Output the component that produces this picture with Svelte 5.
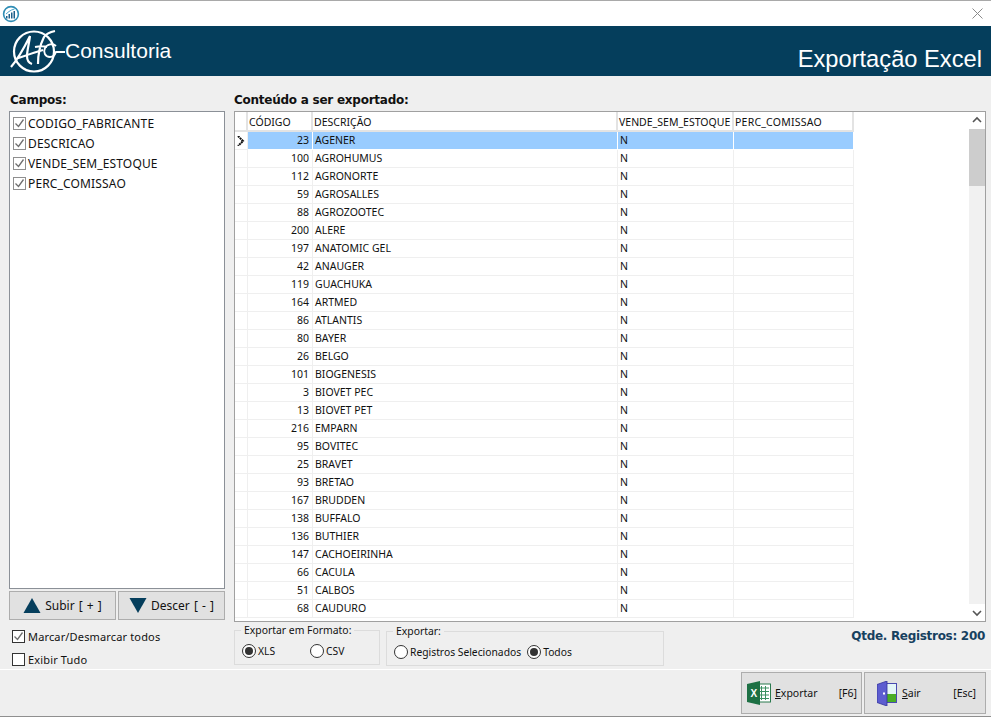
<script>
  const fields = ['CODIGO_FABRICANTE', 'DESCRICAO', 'VENDE_SEM_ESTOQUE', 'PERC_COMISSAO'];
  const rows = [[23,'AGENER'],[100,'AGROHUMUS'],[112,'AGRONORTE'],[59,'AGROSALLES'],[88,'AGROZOOTEC'],[200,'ALERE'],[197,'ANATOMIC GEL'],[42,'ANAUGER'],[119,'GUACHUKA'],[164,'ARTMED'],[86,'ATLANTIS'],[80,'BAYER'],[26,'BELGO'],[101,'BIOGENESIS'],[3,'BIOVET PEC'],[13,'BIOVET PET'],[216,'EMPARN'],[95,'BOVITEC'],[25,'BRAVET'],[93,'BRETAO'],[167,'BRUDDEN'],[138,'BUFFALO'],[136,'BUTHIER'],[147,'CACHOEIRINHA'],[66,'CACULA'],[51,'CALBOS'],[68,'CAUDURO']];
</script>

<div class="win">
  <div class="titlebar">
    <svg class="appicon" width="18" height="18" viewBox="0 0 18 18">
      <circle cx="9" cy="9" r="7.4" fill="#fff" stroke="#2f8db5" stroke-width="1.6"/>
      <path d="M4 13.500h1.500v-2.500H4zM6.500 13.500H8V9H6.500zM9 13.500h1.500V7.500H9zM11.500 13.500H13V6h-1.500z" fill="#1c5f8a"/>
      <path d="M4 9l3-2.500 2.500-1.500 3-1" fill="none" stroke="#4aa3c9" stroke-width="1"/>
    </svg>
    <svg class="close" width="11" height="11" viewBox="0 0 11 11"><path d="M.5.5l10 10M10.5.5l-10 10" stroke="#8a8a8a" fill="none"/></svg>
  </div>

  <header class="banner">
    <div class="brand">
      <svg width="56" height="50" viewBox="0 0 56 50">
        <circle cx="24" cy="25.500" r="20" fill="none" stroke="#fff" stroke-width="2.200"/>
        <path d="M1 41C8 33 14 22 20 10c-1 8-3 15-3 20 0 4 2 7 5 8M6 33c6-2 16-6 27-9" fill="none" stroke="#fff" stroke-width="2.200"/>
        <path d="M28 38c0-9 2-19 6-27 2-3 6-5 11-6M25 21c5-1 9-1 12 0" fill="none" stroke="#fff" stroke-width="2.200"/>
        <path d="M46 20c-3-3-9-2-11 2s0 9 5 9c3 0 5-2 6-5h9" fill="none" stroke="#fff" stroke-width="1.800"/>
      </svg>
      <span class="brandname">Consultoria</span>
    </div>
    <div class="screen-title">Exportação Excel</div>
  </header>

  <main class="body">
    <section class="left">
      <h2>Campos:</h2>
      <div class="listbox">
        {#each fields as f}
          <div class="field">
            <span class="cb cb-soft"><svg width="11" height="11" viewBox="0 0 11 11"><path d="M1.5 5.5l3 3 5-7" fill="none" stroke="#6e6e6e" stroke-width="1.3"/></svg></span>
            <span>{f}</span>
          </div>
        {/each}
      </div>
      <div class="moves">
        <button class="move"><svg width="18" height="15" viewBox="0 0 18 15"><path d="M9 0l8.5 15H.5z" fill="#053e5c"/></svg><span>Subir [ + ]</span></button>
        <button class="move"><svg width="18" height="15" viewBox="0 0 18 15"><path d="M.5 0h17L9 15z" fill="#053e5c"/></svg><span>Descer [ - ]</span></button>
      </div>
      <div class="checks">
        <label class="check"><span class="cb cb-dark"><svg width="11" height="11" viewBox="0 0 11 11"><path d="M1.5 5.5l3 3 5-7" fill="none" stroke="#6e6e6e" stroke-width="1.3"/></svg></span>Marcar/Desmarcar todos</label>
        <label class="check"><span class="cb cb-dark"></span>Exibir Tudo</label>
      </div>
    </section>

    <section class="right">
      <h2>Conteúdo a ser exportado:</h2>
      <div class="gridbox">
        <div class="grid">
          <div class="row head">
            <div class="c ind"></div><div class="c cod">CÓDIGO</div><div class="c desc">DESCRIÇÃO</div><div class="c vende">VENDE_SEM_ESTOQUE</div><div class="c perc">PERC_COMISSAO</div>
          </div>
          {#each rows as r, i}
            <div class="row" class:sel={i === 0}>
              <div class="c ind">{#if i === 0}<svg width="8" height="10" viewBox="0 0 8 10"><path d="M1 0l5 5-5 5" fill="none" stroke="#111" stroke-width="2" stroke-dasharray="2 .6"/></svg>{/if}</div>
              <div class="c cod num">{r[0]}</div>
              <div class="c desc val">{r[1]}</div>
              <div class="c vende val">N</div>
              <div class="c perc"></div>
            </div>
          {/each}
        </div>
        <div class="scroll">
          <svg width="16" height="17" viewBox="0 0 16 17"><path d="M4 10l4-4 4 4" fill="none" stroke="#555" stroke-width="1.6"/></svg>
          <div class="track"><div class="thumb"></div></div>
          <svg width="16" height="17" viewBox="0 0 16 17"><path d="M4 7l4 4 4-4" fill="none" stroke="#555" stroke-width="1.6"/></svg>
        </div>
      </div>
      <div class="under">
        <fieldset class="fmt">
          <legend>Exportar em Formato:</legend>
          <label class="radio"><span class="rd on"></span>XLS</label>
          <label class="radio csv"><span class="rd"></span>CSV</label>
        </fieldset>
        <fieldset class="exp">
          <legend>Exportar:</legend>
          <label class="radio"><span class="rd"></span>Registros Selecionados</label>
          <label class="radio"><span class="rd on"></span>Todos</label>
        </fieldset>
        <div class="qtde">Qtde. Registros: 200</div>
      </div>
    </section>
  </main>

  <footer class="foot">
    <button class="action xl">
      <svg width="24" height="24" viewBox="0 0 24 24">
        <rect x="11" y="3" width="12.500" height="18" fill="#fff" stroke="#2a7a4e"/>
        <path d="M14.500 5v14M18.500 5v14M12 7h10M12 10.500h10M12 14h10M12 17.500h10" stroke="#3a8f60" fill="none"/>
        <path d="M0 3l13-3v24L0 21z" fill="#1d7044"/>
        <text x="3.500" y="16" font-size="10" font-weight="700" fill="#fff" font-family="Liberation Sans">X</text>
      </svg>
      <span class="lbl"><u>E</u>xportar</span><span class="key">[F6]</span>
    </button>
    <button class="action door">
      <svg width="20" height="25" viewBox="0 0 20 25">
        <rect x="6.500" y="2.500" width="13" height="19" fill="#e4f6f8" stroke="#4a4ab0"/>
        <rect x="7" y="13" width="12" height="8" fill="#49ad25"/>
        <path d="M0 3.500L10 0v25L0 21.500z" fill="#5d5dd0" stroke="#34349a" stroke-width=".8"/>
        <rect x="6" y="11.500" width="2" height="2" fill="#fff"/>
      </svg>
      <span class="lbl"><u>S</u>air</span><span class="key">[Esc]</span>
    </button>
  </footer>
</div>

<style>
  :global(body) { margin: 0; background: #efefef; }
  .win { width: 991px; height: 717px; display: flex; flex-direction: column; box-sizing: border-box; border-bottom: 1px solid #8f8f8f; background: #efefef; font-family: "Noto Sans", "DejaVu Sans", sans-serif; font-size: 11.5px; color: #111; overflow: hidden; }
  .titlebar { height: 25px; flex: none; background: #fff; border-top: 1px solid #a9a9a9; display: flex; align-items: center; justify-content: space-between; padding: 0 8px 0 2px; }
  .banner { height: 50px; flex: none; background: #053e5c; color: #fff; display: flex; justify-content: space-between; font-family: "Liberation Sans", sans-serif; }
  .brand { display: flex; align-items: center; padding-left: 10px; }
  .brand svg { margin-right: -1px; }
  .brandname { font-size: 21px; }
  .screen-title { font-size: 23.700px; align-self: flex-end; padding: 0 9px 3px 0; }
  .body { flex: 1; display: flex; padding: 0 5px 0 9px; gap: 9px; min-height: 0; border-bottom: 1px solid #fff; }
  h2 { margin: 0; height: 35px; box-sizing: border-box; padding-top: 15px; padding-left: 1px; font-family: "DejaVu Sans", sans-serif; font-size: 12px; font-weight: 700; line-height: 18px; letter-spacing: -.25px; }
  .right h2 { padding-left: 0; }
  .left { width: 216px; flex: none; display: flex; flex-direction: column; }
  .listbox { height: 478px; box-sizing: border-box; background: #fff; border: 1px solid #8b9097; padding: 1px 0 0 3px; }
  .field { height: 20px; display: flex; align-items: center; gap: 2px; font-size: 12px; letter-spacing: .15px; }
  .cb { width: 11px; height: 11px; flex: none; display: inline-block; box-sizing: content-box; background: #fff; }
  .cb-soft { border: 1px solid #8f8f8f; }
  .cb-dark { border: 1px solid #333; }
  .cb svg { display: block; }
  .moves { display: flex; gap: 2px; margin-top: 2px; }
  .move { width: 107px; height: 29px; box-sizing: border-box; background: #e1e1e1; border: 1px solid #adadad; display: flex; align-items: center; justify-content: center; gap: 4px; padding: 0; font: inherit; font-size: 12px; word-spacing: 1px; color: #111; }
  .checks { display: flex; flex-direction: column; gap: 10px; padding: 10px 0 0 3px; }
  .check { display: flex; align-items: center; gap: 3px; height: 13px; font-size: 11px; letter-spacing: .15px; }
  .right { flex: 1; min-width: 0; display: flex; flex-direction: column; }
  .gridbox { height: 511px; box-sizing: border-box; background: #fff; border: 1px solid #a0a0a0; display: flex; justify-content: space-between; width: 752px; }
  .grid { display: flex; flex-direction: column; }
  .row { display: flex; height: 18px; }
  .row.head { height: 18px; border-bottom: 2px solid #e3e3e3; box-sizing: content-box; }
  .c { box-sizing: border-box; border-right: 1px solid #efefef; border-bottom: 1px solid #efefef; font-size: 10.5px; line-height: 17px; white-space: nowrap; overflow: hidden; }
  .head .c { border-bottom: 0; border-right: 2px solid #e3e3e3; line-height: 20px; padding-left: 1px; }
  .ind { width: 13px; display: flex; align-items: center; justify-content: center; background: #fff; }
  .cod { width: 65px; }
  .desc { width: 305px; }
  .vende { width: 116px; }
  .perc { width: 120px; }
  .head .perc { letter-spacing: .22px; }
  .num { text-align: right; padding-right: 3px; }
  .val { padding-left: 2px; }
  .sel .c:not(.ind) { background: #99ccff; border-color: #fff; }
  .scroll { width: 16px; display: flex; flex-direction: column; background: #f4f4f4; }
  .scroll svg { flex: none; background: #fff; }
  .track { flex: 1; background: #f1f1f1; }
  .thumb { height: 57px; background: #cdcdcd; }
  .under { flex: 1; display: flex; align-items: flex-start; gap: 6px; }
  fieldset { margin: 0; box-sizing: border-box; border: 1px solid #dcdcdc; padding: 0 0 0 7px; display: flex; align-items: center; font-size: 10.3px; }
  legend { padding: 0 3px; margin-left: -1px; font-size: 10.4px; line-height: 14px; }
  .fmt { width: 146px; height: 42px; margin-top: 1px; }
  .exp { width: 278px; height: 42px; margin-top: 2px; gap: 6px; }
  .radio { display: flex; align-items: center; gap: 2px; }
  .csv { margin-left: 35px; }
  .rd { width: 12px; height: 12px; border: 1px solid #333; border-radius: 50%; background: #fff; position: relative; flex: none; }
  .rd.on::after { content: ""; position: absolute; inset: 2px; border-radius: 50%; background: #333; }
  .qtde { margin-left: auto; margin-right: 1px; margin-top: 7px; font-family: "DejaVu Sans", sans-serif; font-size: 12px; font-weight: 700; letter-spacing: -.3px; color: #17415f; }
  .foot { height: 46px; flex: none; display: flex; justify-content: flex-end; gap: 2px; padding: 2px 5px 0 0; box-sizing: border-box; }
  .action { width: 122px; height: 42px; box-sizing: border-box; background: #e1e1e1; border: 1px solid #adadad; display: flex; align-items: center; font: inherit; font-size: 10.5px; color: #111; }
  .xl { width: 121px; padding: 0 4px 0 5px; }
  .door { padding: 0 9px 0 12px; }
  .lbl { margin-left: 4px; }
  .door .lbl { margin-left: 5px; }
  .key { margin-left: auto; }
</style>
